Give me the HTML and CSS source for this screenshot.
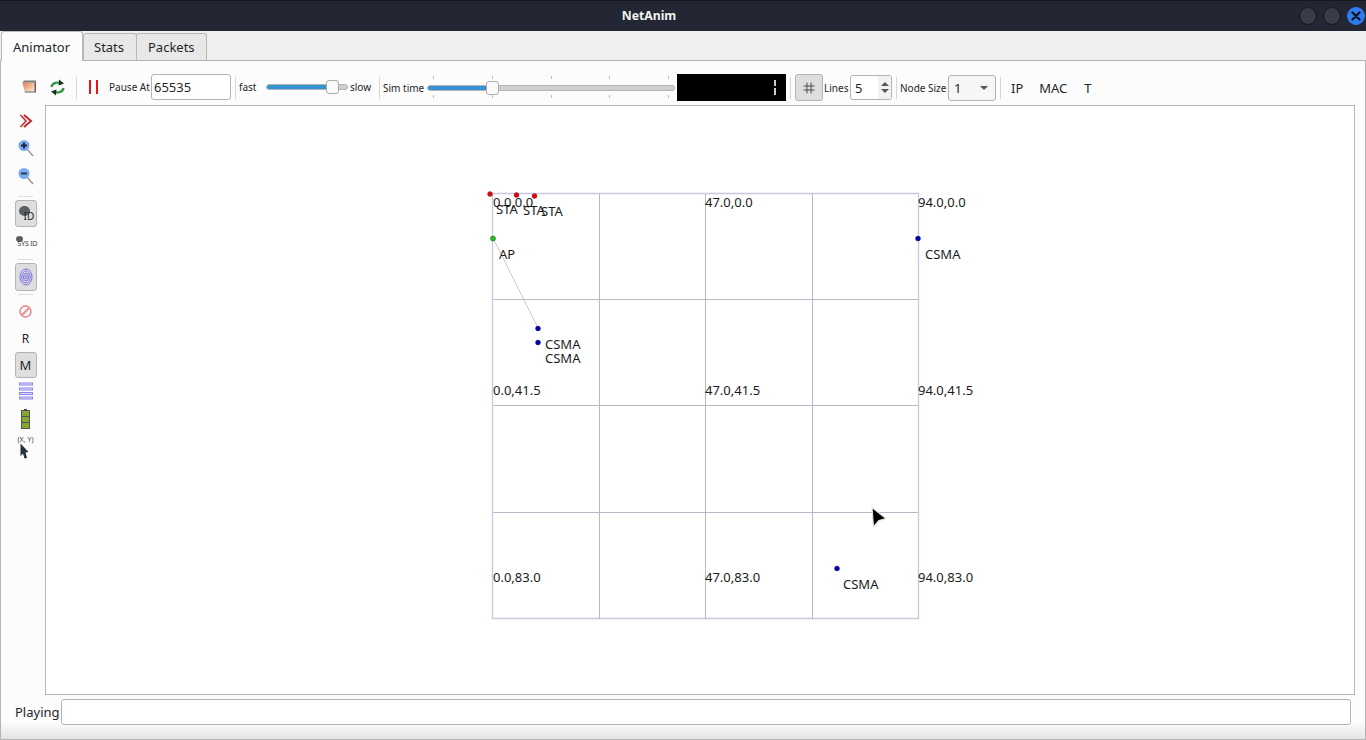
FILE: index.html
```html
<!DOCTYPE html>
<html lang="en">
<head>
    <meta charset="UTF-8">
    <meta name="viewport" content="width=device-width, initial-scale=1.0">
    <title>NetAnim</title>
    <link rel="stylesheet" href="styles.css">
</head>
<body>
    <div class="window">
        <div class="titlebar">
            <span class="title">NetAnim</span>
            <div class="win-btns">
                <span class="win-btn"></span>
                <span class="win-btn"></span>
                <span class="win-btn close">
                    <svg width="10" height="10" viewBox="0 0 10 10"><path d="M1.5 1.5L8.5 8.5M8.5 1.5L1.5 8.5" stroke="#12151c" stroke-width="2.4" stroke-linecap="round"/></svg>
                </span>
            </div>
        </div>
        <div class="tabs">
            <div class="tab active">Animator</div>
            <div class="tab stats">Stats</div>
            <div class="tab packets">Packets</div>
        </div>
        <div class="panel">
            <div class="toolbar">
                <svg class="tool-open" width="15" height="13" viewBox="0 0 15 13">
                    <defs><linearGradient id="og" x1="0" y1="0" x2="1" y2="1"><stop offset="0" stop-color="#e07a4c"/><stop offset="1" stop-color="#fdeede"/></linearGradient></defs>
                    <path d="M.5 2.500H12.500V11.500H2.500Z" fill="url(#og)"/>
                    <path d="M2 .5H14L12.500 2.500H.5Z" fill="#7c7c7c"/>
                    <path d="M14 .5V12.500H3L2.500 11.500H12.500V2.500Z" fill="#5f5f5f"/>
                </svg>
                <svg class="tool-reload" width="15" height="17" viewBox="0 0 15 17">
                    <path d="M1.500 8C2 4 8 2 11.500 5" fill="none" stroke="#2e9440" stroke-width="2.200"/>
                    <path d="M9 .5L14 4.500L8.500 6.500Z" fill="#14361a"/>
                    <path d="M13.500 9C13 13 7 15 3.500 12" fill="none" stroke="#2e9440" stroke-width="2.200"/>
                    <path d="M6 16.500L1 12.500L6.500 10.500Z" fill="#14361a"/>
                </svg>
                <span class="sep s-a"></span>
                <span class="pause-icon"></span>
                <span class="lbl pause-lbl">Pause At</span>
                <input class="field pause-field" value="65535">
                <span class="sep s-b"></span>
                <span class="lbl fast-lbl">fast</span>
                <div class="slider speed"><span class="fill"></span><span class="thumb"></span></div>
                <span class="lbl slow-lbl">slow</span>
                <span class="sep s-c"></span>
                <span class="lbl sim-lbl">Sim time</span>
                <div class="slider sim">
                    <div class="ticks top"><i></i><i></i><i></i><i></i><i></i></div>
                    <span class="fill"></span><span class="thumb"></span>
                    <div class="ticks bottom"><i></i><i></i><i></i><i></i><i></i></div>
                </div>
                <div class="lcd"><span class="lcd-digit"></span></div>
                <span class="sep s-d"></span>
                <div class="tool-btn grid-btn">
                    <svg width="12" height="12" viewBox="0 0 12 12"><path d="M4 .5V11.500M8 .5V11.500M.5 4H11.500M.5 8H11.500" stroke="#4c4c4c" fill="none"/></svg>
                </div>
                <span class="lbl lines-lbl">Lines</span>
                <div class="spin">
                    <span class="spin-val">5</span>
                    <span class="spin-arrows"><i class="up"></i><i class="down"></i></span>
                </div>
                <span class="sep s-e"></span>
                <span class="lbl size-lbl">Node Size</span>
                <div class="combo"><span>1</span><i class="caret"></i></div>
                <span class="sep s-f"></span>
                <span class="txt-btn ip">IP</span>
                <span class="txt-btn mac">MAC</span>
                <span class="txt-btn t">T</span>
            </div>
            <div class="main">
                <div class="sidebar">
                    <svg class="ic ic-fwd" width="14" height="14" viewBox="0 0 14 14" fill="none"><path d="M1.500 1L7 7L1.500 13" stroke="#c9262c" stroke-width="1.500"/><path d="M5 1L12 7L5 13" stroke="#c9262c" stroke-width="2"/></svg>
                    <svg class="ic ic-zin" width="16" height="18" viewBox="0 0 16 18"><path d="M9 10L15 17" stroke="#a78f95" stroke-width="1.400"/><circle cx="6" cy="6.500" r="5.500" fill="#79a9ee"/><path d="M3 6.500H9M6 3.500V9.500" stroke="#1c2233" stroke-width="1.800"/></svg>
                    <svg class="ic ic-zout" width="16" height="18" viewBox="0 0 16 18"><path d="M9 10L15 17" stroke="#a78f95" stroke-width="1.400"/><circle cx="6" cy="6.500" r="5.500" fill="#79a9ee"/><path d="M3 6.500H9" stroke="#2a3040" stroke-width="1.800"/></svg>
                    <span class="hr h-a"></span>
                    <div class="tool-btn side-btn id-btn">
                        <span class="blob"></span><span class="id-txt">ID</span>
                    </div>
                    <div class="sysid"><span class="blob small"></span><span class="sys-txt">SYS ID</span></div>
                    <span class="hr h-b"></span>
                    <div class="tool-btn side-btn print-btn">
                        <svg width="14" height="18" viewBox="0 0 14 18" fill="none" stroke="#7d72e4" stroke-width="1"><ellipse cx="7" cy="9" rx="6" ry="8"/><ellipse cx="7" cy="9" rx="4.200" ry="6"/><ellipse cx="7" cy="9" rx="2.500" ry="4"/><ellipse cx="7" cy="9" rx="1" ry="2"/></svg>
                    </div>
                    <span class="hr h-c"></span>
                    <svg class="ic ic-no" width="13" height="13" viewBox="0 0 13 13" fill="none" stroke="#e0787c" stroke-width="1.300"><circle cx="6.500" cy="6.500" r="5.500"/><path d="M3 10L10 3" stroke-width="2.200" stroke="#e6908f"/></svg>
                    <span class="side-txt r">R</span>
                    <div class="tool-btn side-btn m-btn">M</div>
                    <svg class="ic ic-list" width="14" height="18" viewBox="0 0 14 18"><g fill="#dcdcf8" stroke="#8d84ea"><rect x=".5" y="1" width="13" height="2"/><rect x=".5" y="6" width="13" height="2"/><rect x=".5" y="10.500" width="13" height="2"/><rect x=".5" y="15" width="13" height="2"/></g></svg>
                    <svg class="ic ic-bat" width="9" height="20" viewBox="0 0 9 20"><rect x="3" y="0" width="3" height="2" fill="#444"/><rect x=".5" y="1.500" width="8" height="18" fill="#86a82f" stroke="#555"/><path d="M1 7.500H8M1 13.500H8" stroke="#555"/></svg>
                    <span class="xy">(X, Y)</span>
                    <svg class="ic ic-ptr" width="9" height="16" viewBox="0 0 9 16"><path d="M.5 .5L8.500 9L5.500 9.500L7 15L4.500 15.500L3 10.500L.5 13Z" fill="#26303c"/></svg>
                </div>
                <div class="canvas">
                    <svg class="grid" width="1310" height="590" viewBox="0 0 1310 590">
                        <g stroke="#b8b8c8" fill="none">
                            <path d="M447.500 87.500H873.500V512.500H447.500Z" stroke="#c8c8e0" stroke-width="1.300"/>
                            <path d="M554.500 88V513M660.500 88V513M767.500 88V513"/>
                            <path d="M448 193.500H873M448 299.500H873M448 406.500H873"/>
                        </g>
                        <path d="M448 132L493 222" stroke="#c8c8c8"/>
                        <circle cx="445" cy="88" r="2.500" fill="#e1000f" stroke="#7a3a3a" stroke-width=".4"/>
                        <circle cx="471.500" cy="89" r="2.500" fill="#e1000f" stroke="#7a3a3a" stroke-width=".4"/>
                        <circle cx="489.500" cy="90" r="2.500" fill="#e1000f" stroke="#7a3a3a" stroke-width=".4"/>
                        <circle cx="448" cy="132.500" r="2.500" fill="#1cc41c" stroke="#2d5a2d" stroke-width=".6"/>
                        <circle cx="493" cy="222.500" r="2.500" fill="#0000b4" stroke="#23235a" stroke-width=".4"/>
                        <circle cx="493" cy="236.500" r="2.500" fill="#0000b4" stroke="#23235a" stroke-width=".4"/>
                        <circle cx="873" cy="132.500" r="2.500" fill="#0000b4" stroke="#23235a" stroke-width=".4"/>
                        <circle cx="792" cy="462.500" r="2.500" fill="#0000b4" stroke="#23235a" stroke-width=".4"/>
                    </svg>
                    <span class="cl c-0 r-0">0.0,0.0</span>
                    <span class="cl c-47 r-0">47.0,0.0</span>
                    <span class="cl c-94 r-0">94.0,0.0</span>
                    <span class="cl c-0 r-41">0.0,41.5</span>
                    <span class="cl c-47 r-41">47.0,41.5</span>
                    <span class="cl c-94 r-41">94.0,41.5</span>
                    <span class="cl c-0 r-83">0.0,83.0</span>
                    <span class="cl c-47 r-83">47.0,83.0</span>
                    <span class="cl c-94 r-83">94.0,83.0</span>
                    <span class="cl sta-1">STA</span>
                    <span class="cl sta-2">STA</span>
                    <span class="cl sta-3">STA</span>
                    <span class="cl ap">AP</span>
                    <span class="cl csma-1">CSMA</span>
                    <span class="cl csma-2">CSMA</span>
                    <span class="cl csma-3">CSMA</span>
                    <span class="cl csma-4">CSMA</span>
                    <svg class="cursor" width="18" height="23" viewBox="0 0 18 23"><path d="M2 1.500L16 12.500L9 14.500L3.500 21Z" fill="#000" stroke="#e4e4e4" stroke-width="1.200" stroke-linejoin="round"/></svg>
                </div>
            </div>
            <div class="statusbar">
                <span class="play-lbl">Playing</span>
                <div class="play-field"></div>
            </div>
        </div>
    </div>
</body>
</html>
```

FILE: styles.css
```css
* {
    box-sizing: border-box;
}
html, body {
    margin: 0;
    padding: 0;
    height: 740px;
    overflow: hidden;
    background: #fff;
    font-family: "Noto Sans", sans-serif;
    color: #232629;
}
.window {
    width: 1366px;
    height: 740px;
    display: flex;
    flex-direction: column;
    background: #efefef;
}
.titlebar {
    height: 31px;
    flex-shrink: 0;
    display: flex;
    align-items: center;
    justify-content: center;
    position: relative;
    padding: 0 68px 2px 0;
    background: #232733;
    border-top: 1px solid #15171d;
}
.title {
    color: #f2f2f2;
    font-size: 12.2px;
    font-weight: 700;
}
.win-btns {
    position: absolute;
    right: 1px;
    top: 6px;
    display: flex;
    gap: 6px;
}
.win-btn {
    width: 18px;
    height: 18px;
    border-radius: 50%;
    background: #373b4a;
    border: 1px solid #14161c;
    display: flex;
    align-items: center;
    justify-content: center;
}
.win-btn.close {
    background: #2d7cf0;
    border-color: #2d7cf0;
}
.tabs {
    height: 29px;
    flex-shrink: 0;
    display: flex;
    align-items: flex-end;
    padding-left: 1px;
    position: relative;
}
.tab {
    height: 27px;
    display: flex;
    align-items: center;
    font-size: 13px;
    background: #e8e8e8;
    border: 1px solid #b8b8b8;
    border-bottom: none;
    border-radius: 3px 3px 0 0;
}
.tab.stats {
    width: 54px;
    padding-left: 10px;
}
.tab.packets {
    width: 71px;
    margin-left: -1px;
    padding-left: 11px;
}
.tab.active {
    width: 82px;
    height: 30px;
    padding-left: 11px;
    background: #fcfcfc;
    position: relative;
    z-index: 1;
    margin-bottom: -1px;
}
.panel {
    flex: 1;
    display: flex;
    flex-direction: column;
    background: linear-gradient(#fcfcfc 660px, #fbfbfb 662px, #e4e4e4);
    border: 1px solid #b4b4b4;
    min-height: 0;
}
.toolbar {
    height: 44px;
    flex-shrink: 0;
    display: flex;
    align-items: center;
    padding-top: 9px;
}
.lbl {
    font-size: 10px;
    white-space: nowrap;
}
.sep {
    width: 1px;
    height: 22px;
    background: #d6d6d6;
    flex-shrink: 0;
}
.tool-open {
    margin-left: 21px;
    margin-top: -3px;
}
.tool-reload { margin-left: 13px; }
.s-a { margin-left: 11px; }
.pause-icon {
    width: 9px;
    height: 14px;
    margin-left: 12px;
    margin-top: -1px;
    border-left: 2px solid #e8141a;
    border-right: 2px solid #e8141a;
}
.pause-lbl {
    margin-left: 11px;
    margin-top: -1px;
    width: 42px;
}
.field {
    font-family: inherit;
    font-size: 13px;
    color: #232629;
    background: #fff;
    border: 1px solid #b4b4b4;
    border-radius: 3px;
    outline: none;
}
.pause-field {
    width: 80px;
    height: 26px;
    margin-top: -1px;
    padding: 0 2px;
}
.s-b { margin-left: 4px; }
.fast-lbl {
    margin-left: 3px;
    margin-top: -1px;
    width: 27px;
}
.slider {
    position: relative;
    flex-shrink: 0;
    height: 6px;
    background: #cfcfcf;
    border: 1px solid #b4b4b4;
    border-radius: 3px;
}
.slider .fill {
    position: absolute;
    left: 0;
    top: 0;
    bottom: 0;
    background: #3492d2;
    border-radius: 3px 0 0 3px;
}
.slider .thumb {
    position: absolute;
    top: -5px;
    width: 13px;
    height: 14px;
    background: #fafafa;
    border: 1px solid #acacac;
    border-radius: 3px;
}
.speed {
    width: 82px;
    margin-top: -1px;
}
.speed .fill { width: 61px; }
.speed .thumb { left: 59px; }
.slow-lbl {
    margin-left: 2px;
    margin-top: -1px;
    width: 29px;
}
.sim-lbl { margin-left: 3px; width: 44px; }
.sim { width: 248px; }
.sim .fill { width: 60px; }
.sim .thumb { left: 58px; }
.ticks {
    position: absolute;
    left: 5px;
    right: 5px;
    display: flex;
    justify-content: space-between;
}
.ticks.top { top: -10px; }
.ticks.bottom { top: 9px; }
.ticks i {
    width: 1px;
    height: 3px;
    background: #bcbcbc;
}
.lcd {
    width: 109px;
    height: 27px;
    margin-left: 2px;
    background: #000;
    position: relative;
}
.lcd-digit {
    position: absolute;
    left: 97px;
    top: 6px;
    width: 2px;
    height: 15px;
    background: linear-gradient(#ccc 6px, #000 6px, #000 8px, #ccc 8px);
}
.s-d { margin-left: 4px; }
.tool-btn {
    display: flex;
    align-items: center;
    justify-content: center;
    background: #dedede;
    border: 1px solid #b4b4b4;
    border-radius: 3px;
    flex-shrink: 0;
}
.grid-btn {
    width: 28px;
    height: 27px;
    margin-left: 4px;
}
.lines-lbl { margin-left: 1px; width: 26px; }
.spin {
    width: 42px;
    height: 25px;
    display: flex;
    align-items: center;
    background: #fff;
    border: 1px solid #b4b4b4;
    border-radius: 3px;
    font-size: 13px;
}
.spin-val {
    width: 27px;
    padding-left: 4px;
}
.spin-arrows {
    flex: 1;
    height: 100%;
    display: flex;
    flex-direction: column;
    align-items: center;
    justify-content: center;
    gap: 3px;
    background: #f1f1f1;
    border-radius: 0 3px 3px 0;
}
.spin-arrows i {
    border-left: 4px solid transparent;
    border-right: 4px solid transparent;
}
.spin-arrows .up { border-bottom: 4px solid #555; }
.spin-arrows .down { border-top: 4px solid #555; }
.s-e { margin-left: 4px; }
.size-lbl { margin-left: 3px; width: 48px; }
.combo {
    width: 48px;
    height: 26px;
    display: flex;
    align-items: center;
    justify-content: space-between;
    padding: 0 7px 0 5px;
    background: #f6f6f6;
    border: 1px solid #b4b4b4;
    border-radius: 3px;
    font-size: 13px;
}
.caret {
    border-left: 4px solid transparent;
    border-right: 4px solid transparent;
    border-top: 4px solid #555;
}
.s-f { margin-left: 4px; }
.txt-btn {
    font-size: 13px;
}
.ip { margin-left: 10px; }
.mac { margin-left: 16px; }
.t { margin-left: 17px; }
.main {
    height: 590px;
    flex-shrink: 0;
    display: flex;
}
.sidebar {
    width: 44px;
    flex-shrink: 0;
    display: flex;
    flex-direction: column;
    align-items: center;
    padding-left: 5px;
    position: relative;
}
.ic { flex-shrink: 0; }
.ic-fwd { margin-top: 9px; }
.ic-zin { margin-top: 11px; }
.ic-zout { margin-top: 10px; }
.hr {
    width: 15px;
    height: 1px;
    background: #dedede;
    flex-shrink: 0;
}
.h-a { margin-top: 11px; }
.side-btn {
    width: 22px;
    height: 27px;
}
.id-btn {
    margin-top: 3px;
    position: relative;
}
.blob {
    position: absolute;
    left: 3px;
    top: 5px;
    width: 11px;
    height: 10px;
    border-radius: 50%;
    background: #5b5f62;
}
.id-txt {
    position: absolute;
    left: 8px;
    top: 9px;
    font-size: 10px;
    line-height: 12px;
    color: #222;
}
.sysid {
    position: relative;
    width: 22px;
    height: 15px;
    margin-top: 9px;
    flex-shrink: 0;
}
.blob.small {
    left: 1px;
    top: 0;
    width: 7px;
    height: 6px;
}
.sys-txt {
    position: absolute;
    left: 3px;
    top: 3px;
    font-size: 7px;
    line-height: 10px;
    letter-spacing: -.2px;
    color: #444;
    white-space: nowrap;
}
.h-b { margin-top: 8px; }
.print-btn {
    margin-top: 3px;
    height: 28px;
}
.h-c { margin-top: 3px; }
.ic-no { margin-top: 10px; }
.side-txt {
    font-size: 12px;
    line-height: 16px;
    margin-top: 13px;
}
.m-btn {
    margin-top: 5px;
    height: 26px;
    font-size: 13px;
}
.ic-list { margin-top: 4px; }
.ic-bat { margin-top: 9px; }
.xy {
    font-size: 7px;
    line-height: 8px;
    margin-top: 7px;
    color: #444;
}
.ic-ptr { margin-top: -1px; margin-right: 2px; }
.canvas {
    flex: 1;
    position: relative;
    width: 1310px;
    margin-right: 10px;
    background: #fff;
    border: 1px solid #b4b4b4;
}
.grid {
    position: absolute;
    left: -1px;
    top: 0;
}
.cl {
    position: absolute;
    font-size: 13px;
    line-height: 18px;
    color: #1a1a1a;
    white-space: nowrap;
}
.c-0 { left: 447px; }
.c-47 { left: 659px; }
.c-94 { left: 872px; }
.r-0 { top: 87px; }
.r-41 { top: 275px; }
.r-83 { top: 462px; }
.sta-1 { left: 450px; top: 94px; }
.sta-2 { left: 477px; top: 95px; }
.sta-3 { left: 495px; top: 96px; }
.ap { left: 453px; top: 139px; }
.csma-1 { left: 499px; top: 229px; }
.csma-2 { left: 499px; top: 243px; }
.csma-3 { left: 879px; top: 139px; }
.csma-4 { left: 797px; top: 469px; }
.cursor {
    position: absolute;
    left: 824px;
    top: 400px;
}
.statusbar {
    height: 34px;
    flex-shrink: 0;
    display: flex;
    align-items: center;
}
.play-lbl {
    margin-left: 14px;
    width: 46px;
    font-size: 13px;
}
.play-field {
    width: 1290px;
    height: 26px;
    background: #fff;
    border: 1px solid #b4b4b4;
    border-radius: 3px;
}
```
